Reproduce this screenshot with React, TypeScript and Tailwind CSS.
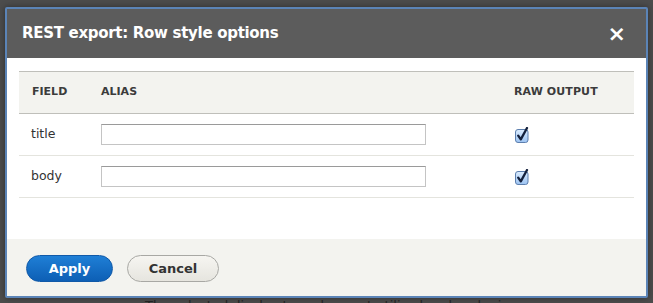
import React, { useState } from 'react';

const font = { fontFamily: '"DejaVu Sans", "Liberation Sans", sans-serif' };

function MacCheckbox({ checked, onChange }: { checked: boolean; onChange: () => void }) {
  return (
    <button type="button" onClick={onChange} className="block w-[14px] h-[16px] cursor-pointer">
      <svg width="14" height="16" viewBox="0 0 14 16">
        <defs>
          <linearGradient id="cbfill" x1="0" y1="0" x2="0" y2="1">
            <stop offset="0" stopColor="#dcedff" />
            <stop offset="1" stopColor="#9cc3f2" />
          </linearGradient>
        </defs>
        <rect x="0.5" y="2.5" width="12.5" height="13" rx="2.5" fill="url(#cbfill)" stroke="#5d7fae" />
        {checked && (
          <path d="M3.2 8.6 L5.8 12.4 L12 1" fill="none" stroke="#14213d" strokeWidth="2.3" strokeLinecap="round" strokeLinejoin="round" />
        )}
      </svg>
    </button>
  );
}

export default function App() {
  const [rows, setRows] = useState([
    { field: 'title', alias: '', raw: true },
    { field: 'body', alias: '', raw: true },
  ]);

  const toggle = (i: number) =>
    setRows((r) => r.map((row, j) => (j === i ? { ...row, raw: !row.raw } : row)));

  return (
    <div className="h-[303px] w-[653px] overflow-hidden bg-[#4c4c4c] pt-[7px] px-[5px]" style={font}>
      <div className="border-2 border-[#5b84b7] rounded-[2px] bg-white shadow-[0_0_6px_rgba(0,0,0,0.4)]">
        {/* Title bar */}
        <div className="h-[49px] bg-[#5c5c5c] flex items-center justify-between pl-[15px] pr-[20px]">
          <span className="text-white text-[15px] font-bold tracking-[-0.3px]">REST export: Row style options</span>
          <span className="text-white text-[22px] font-bold leading-none">×</span>
        </div>

        {/* Content */}
        <div className="h-[181px] px-[12px] pt-[13px]">
          <table className="w-full table-fixed border-collapse text-[12.5px] text-[#333]">
            <colgroup>
              <col className="w-[82px]" />
              <col className="w-[413px]" />
              <col />
            </colgroup>
            <thead>
              <tr className="h-[42px] bg-[#f3f3ef] border-y border-[#bfbfba]">
                <th className="pl-[13px] text-left text-[11px] font-bold text-[#3b3b3b] uppercase">Field</th>
                <th className="text-left text-[11px] font-bold text-[#3b3b3b] uppercase">Alias</th>
                <th className="text-left text-[11px] font-bold text-[#3b3b3b] uppercase tracking-[0.1px]">Raw output</th>
              </tr>
            </thead>
            <tbody>
              {rows.map((row, i) => (
                <tr key={row.field} className="h-[42px] border-b border-[#e4e4de]">
                  <td className="pl-[12px]">{row.field}</td>
                  <td>
                    <input
                      value={row.alias}
                      onChange={(e) =>
                        setRows((r) => r.map((x, j) => (j === i ? { ...x, alias: e.target.value } : x)))
                      }
                      className="block w-[325px] h-[21px] border border-[#c4c4c4] border-t-[#9a9a9a] bg-white outline-none px-1 text-[13px]"
                    />
                  </td>
                  <td className="pl-[1px]">
                    <MacCheckbox checked={row.raw} onChange={() => toggle(i)} />
                  </td>
                </tr>
              ))}
            </tbody>
          </table>
        </div>

        {/* Button pane */}
        <div className="h-[57px] bg-[#f3f3ef] flex items-start gap-[14px] pl-[19px] pt-[16px]">
          <button className="w-[87px] h-[27px] rounded-full bg-gradient-to-b from-[#1f7fd6] to-[#0d5fb5] border border-[#1059a8] text-white text-[13px] font-bold">
            Apply
          </button>
          <button className="w-[92px] h-[27px] rounded-full bg-gradient-to-b from-[#f6f5f1] to-[#e6e5df] border border-[#a8a8a4] text-[#333] text-[13px] font-bold">
            Cancel
          </button>
        </div>
      </div>
      <div className="pl-[140px] text-[13px] text-[#222] leading-none pt-[1px]">
        The selected display type does not utilize header plugins
      </div>
    </div>
  );
}
